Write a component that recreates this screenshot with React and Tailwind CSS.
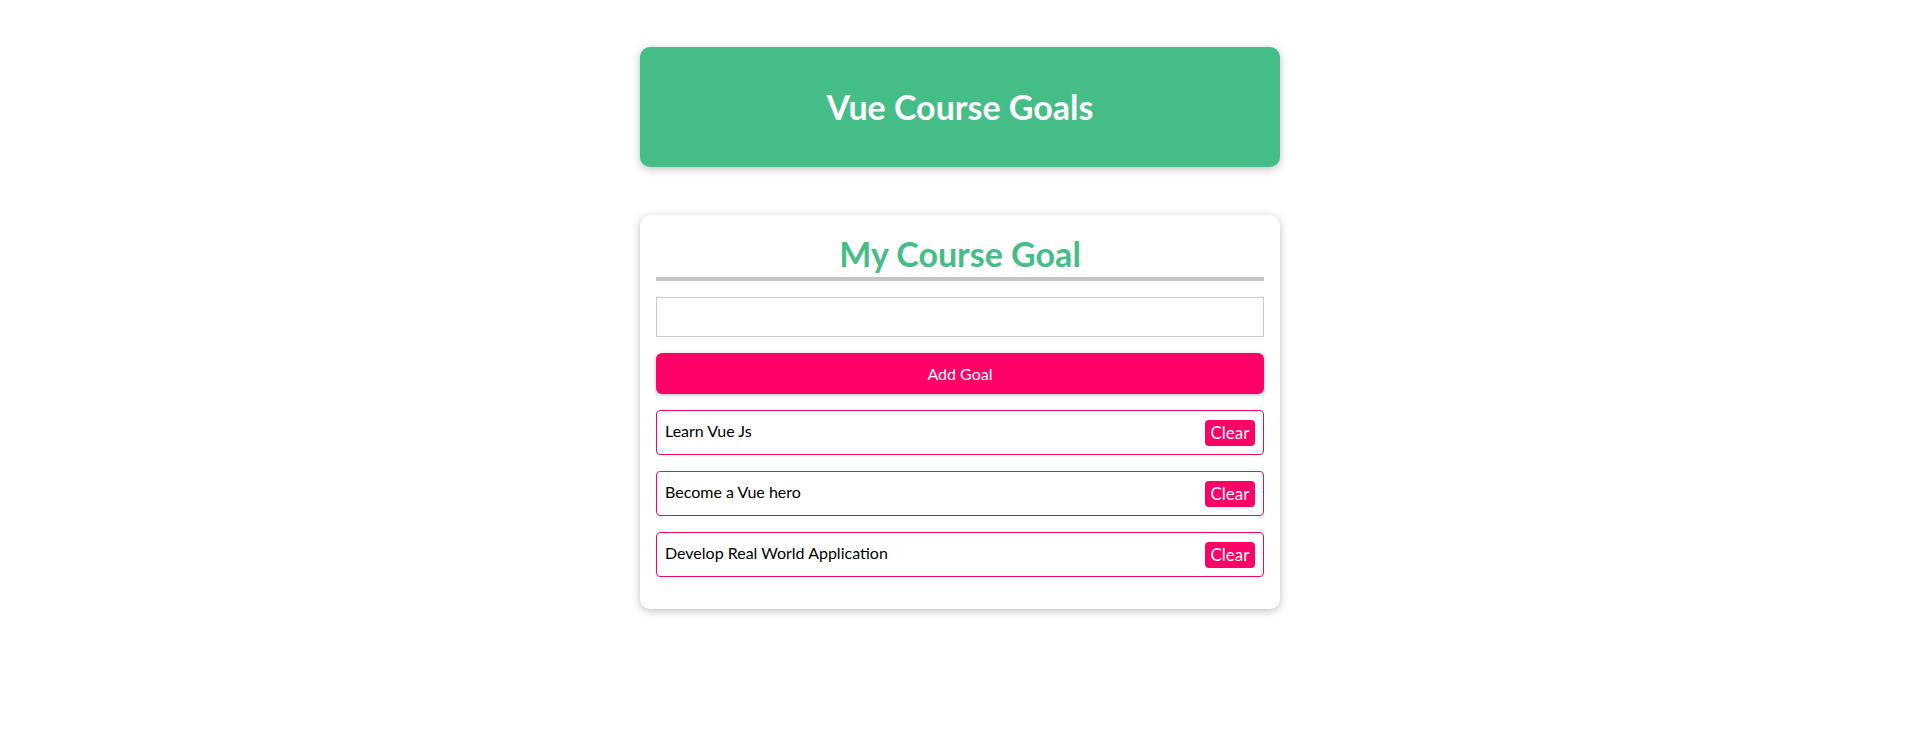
import { useState } from "react";

const initialGoals = ["Learn Vue Js", "Become a Vue hero", "Develop Real World Application"];

export default function App() {
  const [goals, setGoals] = useState(initialGoals);
  const [text, setText] = useState("");

  function addGoal() {
    if (!text.trim()) return;
    setGoals([...goals, text.trim()]);
    setText("");
  }

  function removeGoal(idx) {
    setGoals(goals.filter((_, i) => i !== idx));
  }

  return (
    <div className="bg-white pt-px font-['Lato','Noto_Sans',sans-serif] text-black">
      <header className="mx-auto mt-[46px] mb-12 w-[90%] max-w-[40rem] rounded-[10px] bg-[#45bd87] p-4 text-center text-white shadow-[0_2px_8px_rgba(0,0,0,0.26)]">
        <h1 className="my-[21px] text-[34px] font-bold leading-[46px]">Vue Course Goals</h1>
      </header>

      <section className="mx-auto my-12 w-[90%] max-w-[40rem] rounded-[10px] bg-white p-4 shadow-[0_2px_8px_rgba(0,0,0,0.26)]">
        <h2 className="border-b-4 border-[#c4c4c4] text-center text-[34px] font-bold leading-[46px] text-[#45bd87]">
          My Course Goal
        </h2>

        <input
          type="text"
          value={text}
          onChange={(e) => setText(e.target.value)}
          className="mt-4 block h-10 w-full border border-[#c8c8c8] px-2 text-base outline-none"
        />

        <button
          type="button"
          onClick={addGoal}
          className="mt-4 block h-[41px] w-full rounded-md bg-[#ff0066] text-base text-white shadow-[0_1px_4px_rgba(0,0,0,0.26)]"
        >
          Add Goal
        </button>

        <ul className="my-4 space-y-4">
          {goals.map((goal, i) => (
            <li
              key={goal + i}
              className="flex items-start justify-between rounded border border-[#ec0a63] p-2"
            >
              <p className="text-base leading-[23px]">{goal}</p>
              <button
                type="button"
                onClick={() => removeGoal(i)}
                className="mt-px h-[26px] w-[50px] rounded bg-[#ff0066] text-[17px] leading-[26px] text-white"
              >
                Clear
              </button>
            </li>
          ))}
        </ul>
      </section>
    </div>
  );
}
